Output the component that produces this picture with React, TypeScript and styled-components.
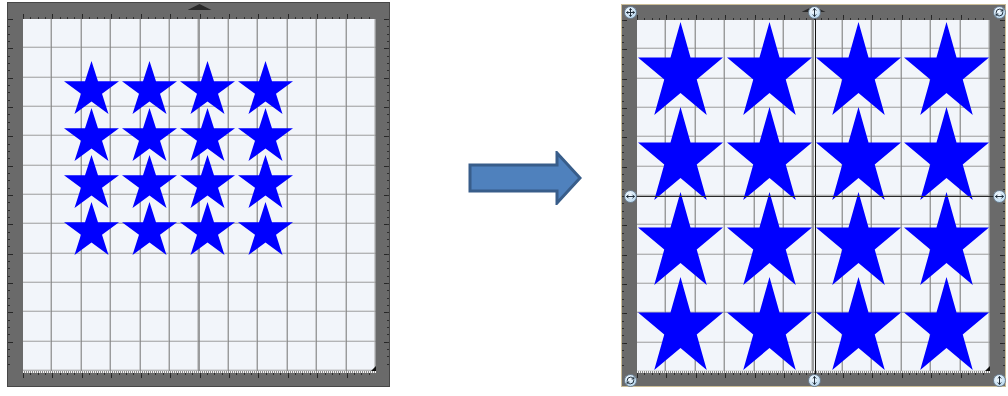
import React from "react";
import styled, { createGlobalStyle } from "styled-components";
import { Move, MoveHorizontal, MoveVertical, RefreshCw } from "lucide-react";

const GlobalStyle = createGlobalStyle`
  html, body {
    margin: 0;
    padding: 0;
    background: #fff;
  }
  body {
    font-family: "Liberation Sans", Arial, sans-serif;
  }
`;

const Page = styled.div`
  display: flex;
  align-items: flex-start;
  width: 1008px;
  height: 396px;
  padding-left: 7px;
  box-sizing: border-box;
  overflow: hidden;
`;

type Pad = { t: number; r: number; b: number; l: number };

const Mat = styled.div<{ $pad: Pad; $h: number; $edge: string; $top: number }>`
  display: grid;
  grid-template-columns: ${(p) => p.$pad.l - 1}px 353px ${(p) => p.$pad.r - 1}px;
  grid-template-rows: ${(p) => p.$pad.t - 1}px ${(p) => p.$h}px ${(p) => p.$pad.b - 1}px;
  margin-top: ${(p) => p.$top}px;
  background: #6a6a6a;
  border: 1px solid ${(p) => p.$edge};
`;

const TopRuler = styled.div`
  grid-area: 1 / 2;
  display: flex;
  justify-content: center;
  align-items: flex-start;
  background-image: repeating-linear-gradient(to right, #2e2e2e 0 1px, transparent 1px 7.355px),
    repeating-linear-gradient(to right, #262626 0 1px, transparent 1px 29.42px);
  background-size: 100% 2px, 100% 5px;
  background-position: left bottom, left bottom;
  background-repeat: no-repeat;
`;

const FeedMark = styled.div`
  width: 24px;
  height: 6px;
  margin-top: 1px;
  background: #2a2a2a;
  clip-path: polygon(50% 0, 100% 100%, 0 100%);
`;

const SideRuler = styled.div<{ $side: "left" | "right" }>`
  grid-area: 2 / ${(p) => (p.$side === "left" ? 1 : 3)};
  background-image: repeating-linear-gradient(to bottom, #2e2e2e 0 1px, transparent 1px 7.33px),
    repeating-linear-gradient(to bottom, #262626 0 1px, transparent 1px 29.33px);
  background-size: 2px 100%, 5px 100%;
  background-position: ${(p) => p.$side} top, ${(p) => p.$side} top;
  background-repeat: no-repeat;
`;

const BottomRuler = styled.div`
  grid-area: 3 / 2;
  background-image: repeating-linear-gradient(to right, #f3f3f3 0 1px, #8d8d8d 1px 2px),
    repeating-linear-gradient(to right, #2e2e2e 0 1px, transparent 1px 7.355px),
    repeating-linear-gradient(to right, #262626 0 1px, transparent 1px 29.42px);
  background-size: 100% 2px, 100% 2px, 100% 5px;
  background-position: left top, left 2px, left 2px;
  background-repeat: no-repeat;
`;

const Sheet = styled.div`
  grid-area: 2 / 2;
  position: relative;
  background-color: #f2f5fa;
  background-image: repeating-linear-gradient(
      to right,
      transparent 0 27.4px,
      rgba(170, 170, 170, 0.55) 27.4px 28.4px,
      rgba(125, 125, 125, 0.75) 28.4px 29.42px
    ),
    repeating-linear-gradient(
      to bottom,
      transparent 0 27.3px,
      rgba(190, 190, 190, 0.45) 27.3px 28.3px,
      rgba(145, 145, 145, 0.65) 28.3px 29.33px
    );

  &::after {
    content: "";
    position: absolute;
    right: 0;
    bottom: 0;
    border-style: solid;
    border-width: 0 0 5px 5px;
    border-color: transparent transparent #111 transparent;
  }
`;

const StarGrid = styled.div<{ $col: number; $row: number; $ml: number; $mt: number }>`
  display: grid;
  grid-template-columns: repeat(4, ${(p) => p.$col}px);
  grid-auto-rows: ${(p) => p.$row}px;
  margin: ${(p) => p.$mt}px 0 0 ${(p) => p.$ml}px;
`;

const StarSvg = styled.svg<{ $w: number; $h: number }>`
  display: block;
  align-self: start;
  width: ${(p) => p.$w}px;
  height: ${(p) => p.$h}px;
`;

const Star = ({ w, h }: { w: number; h: number }) => (
  <StarSvg $w={w} $h={h} viewBox="0 0 100 100" preserveAspectRatio="none">
    <path
      d="M50 0 L61.8 38.2 L100 38.2 L69.1 61.8 L80.9 100 L50 76.4 L19.1 100 L30.9 61.8 L0 38.2 L38.2 38.2 Z"
      fill="#0000ff"
    />
  </StarSvg>
);

const ArrowBox = styled.svg`
  display: block;
  flex-shrink: 0;
  width: 114px;
  height: 54px;
  margin: 151px 0 0 78px;
`;

const SelectWrap = styled.div`
  position: relative;
  margin: 4px 0 0 39px;
`;

const Selection = styled.div`
  position: absolute;
  left: 9px;
  top: 8px;
  width: 369px;
  height: 368px;
  pointer-events: none;
`;

const GuideV = styled.div`
  position: absolute;
  left: 50%;
  top: 0;
  bottom: 0;
  width: 1px;
  background: #111;
`;

const GuideH = styled.div`
  position: absolute;
  top: 50%;
  left: 0;
  right: 0;
  height: 1px;
  background: #2a2a2a;
`;

const Handle = styled.div<{ $x: number; $y: number }>`
  position: absolute;
  left: ${(p) => p.$x}%;
  top: ${(p) => p.$y}%;
  width: 13px;
  height: 13px;
  margin: -6.5px 0 0 -6.5px;
  box-sizing: border-box;
  border-radius: 50%;
  border: 1px solid #6f8294;
  background: radial-gradient(circle at 40% 35%, #f6fbff, #bcdaf0 75%);
  display: flex;
  align-items: center;
  justify-content: center;
  color: #1c2a38;
`;

const handles = [
  { x: 0, y: 0, icon: <Move size={9} strokeWidth={2.6} /> },
  { x: 50, y: 0, icon: <MoveVertical size={9} strokeWidth={2.6} /> },
  { x: 100, y: 0, icon: <RefreshCw size={9} strokeWidth={2.6} /> },
  { x: 0, y: 50, icon: <MoveHorizontal size={9} strokeWidth={2.6} /> },
  { x: 100, y: 50, icon: <MoveHorizontal size={9} strokeWidth={2.6} /> },
  { x: 0, y: 100, icon: <RefreshCw size={9} strokeWidth={2.6} /> },
  { x: 50, y: 100, icon: <MoveVertical size={9} strokeWidth={2.6} /> },
  { x: 100, y: 100, icon: <MoveVertical size={9} strokeWidth={2.6} /> },
];

const sixteen = Array.from({ length: 16 }, (_, i) => i);

const CuttingMat = ({
  pad,
  h,
  edge,
  top,
  children,
}: {
  pad: Pad;
  h: number;
  edge: string;
  top: number;
  children: React.ReactNode;
}) => (
  <Mat $pad={pad} $h={h} $edge={edge} $top={top}>
    <TopRuler>
      <FeedMark />
    </TopRuler>
    <SideRuler $side="left" />
    <Sheet>{children}</Sheet>
    <SideRuler $side="right" />
    <BottomRuler />
  </Mat>
);

export default function App() {
  return (
    <>
      <GlobalStyle />
      <Page>
        <CuttingMat pad={{ t: 17, r: 14, b: 16, l: 16 }} h={352} edge="#474747" top={2}>
          <StarGrid $col={58} $row={47} $ml={41} $mt={42}>
            {sixteen.map((i) => (
              <Star key={i} w={55} h={53} />
            ))}
          </StarGrid>
        </CuttingMat>

        <ArrowBox viewBox="0 0 114 54">
          <path
            d="M2 14 H89 V2 L112 27 L89 52 V40 H2 Z"
            fill="#4f81bd"
            stroke="#385d8a"
            strokeWidth={3}
          />
        </ArrowBox>

        <SelectWrap>
          <CuttingMat pad={{ t: 16, r: 16, b: 16, l: 16 }} h={351} edge="#cbbd97" top={0}>
            <StarGrid $col={88.8} $row={85} $ml={1} $mt={2}>
              {sixteen.map((i) => (
                <Star key={i} w={85} h={93} />
              ))}
            </StarGrid>
          </CuttingMat>
          <Selection>
            <GuideV />
            <GuideH />
            {handles.map((hd, i) => (
              <Handle key={i} $x={hd.x} $y={hd.y}>
                {hd.icon}
              </Handle>
            ))}
          </Selection>
        </SelectWrap>
      </Page>
    </>
  );
}
